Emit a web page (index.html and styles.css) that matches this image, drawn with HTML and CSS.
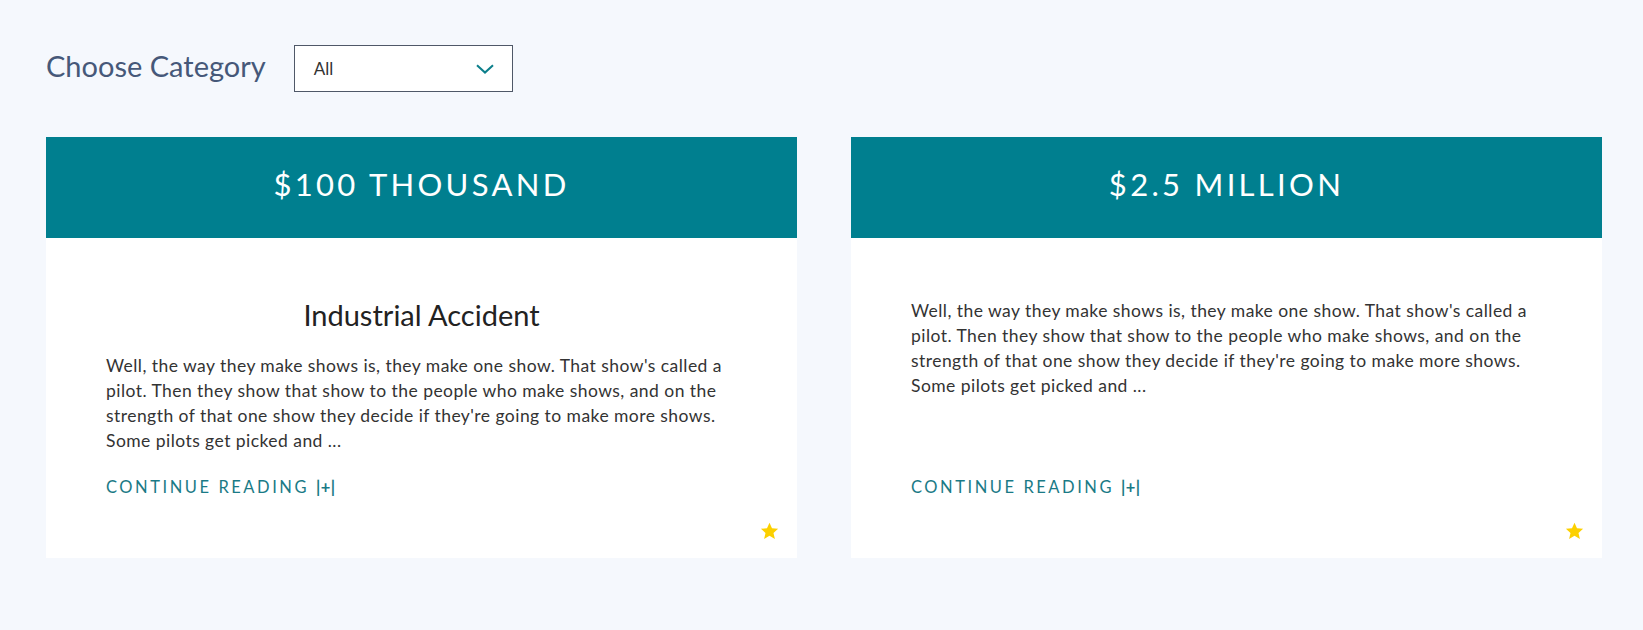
FILE: index.html
```html
<!DOCTYPE html>
<html lang="en">
<head>
<meta charset="utf-8">
<title>Categories</title>
<link rel="stylesheet" href="styles.css">
</head>
<body>
<main class="page">
  <div class="filter">
    <h2 class="filter-label">Choose Category</h2>
    <div class="select">
      <span class="select-value">All</span>
      <svg class="chevron" width="18" height="10" viewBox="0 0 18 10"><path d="M1 1.2 L9 8.6 L17 1.2" fill="none" stroke="#0c7f8b" stroke-width="2"/></svg>
    </div>
  </div>
  <div class="cards">
    <article class="card">
      <header class="card-head">$100 THOUSAND</header>
      <div class="card-body">
        <h3 class="card-title">Industrial Accident</h3>
        <p class="card-text">Well, the way they make shows is, they make one show. That show's called a pilot. Then they show that show to the people who make shows, and on the strength of that one show they decide if they're going to make more shows. Some pilots get picked and ...</p>
        <a class="card-link" href="#">CONTINUE READING <b class="plus">|+|</b></a>
      </div>
      <svg class="star" width="19" height="18" viewBox="0 0 24 23"><path d="M12 0.8 L15.2 8 L23 8.7 L17.1 13.9 L18.9 21.6 L12 17.6 L5.1 21.6 L6.9 13.9 L1 8.7 L8.8 8 Z" fill="#fcd000"/></svg>
    </article>
    <article class="card">
      <header class="card-head">$2.5 MILLION</header>
      <div class="card-body">
        <p class="card-text">Well, the way they make shows is, they make one show. That show's called a pilot. Then they show that show to the people who make shows, and on the strength of that one show they decide if they're going to make more shows. Some pilots get picked and ...</p>
        <a class="card-link" href="#">CONTINUE READING <b class="plus">|+|</b></a>
      </div>
      <svg class="star" width="19" height="18" viewBox="0 0 24 23"><path d="M12 0.8 L15.2 8 L23 8.7 L17.1 13.9 L18.9 21.6 L12 17.6 L5.1 21.6 L6.9 13.9 L1 8.7 L8.8 8 Z" fill="#fcd000"/></svg>
    </article>
  </div>
</main>
</body>
</html>
```

FILE: styles.css
```css
html, body {
  margin: 0;
  padding: 0;
  background: #f5f8fd;
}
body {
  font-family: Lato, "Noto Sans", "Liberation Sans", sans-serif;
  color: #333;
}
.page {
  padding: 45px 41px 0 46px;
}
.filter {
  display: flex;
  align-items: center;
  gap: 28px;
}
.filter-label {
  margin: 0;
  padding-bottom: 6px;
  font-size: 29px;
  font-weight: 400;
  color: #465879;
}
.select {
  box-sizing: border-box;
  width: 219px;
  height: 47px;
  border: 1px solid #4f5868;
  background: #fff;
  display: flex;
  align-items: center;
  justify-content: space-between;
  padding: 0 18px 0 19px;
}
.select-value {
  font-size: 17px;
  color: #333;
}
.cards {
  display: grid;
  grid-template-columns: 751px 751px;
  gap: 54px;
  margin-top: 45px;
}
.card {
  position: relative;
  background: #fff;
  display: flex;
  flex-direction: column;
  height: 421px;
}
.card-head {
  height: 101px;
  background: #007f8f;
  color: #fff;
  display: flex;
  align-items: center;
  justify-content: center;
  font-size: 31px;
  letter-spacing: 3.3px;
  padding-bottom: 8px;
  box-sizing: border-box;
}
.card-body {
  flex: 1;
  display: flex;
  flex-direction: column;
  padding: 60px 40px 62px 60px;
}
.card-title {
  margin: 0 20px 21px 0;
  text-align: center;
  font-size: 29px;
  font-weight: 400;
  line-height: 34px;
  color: #222;
}
.card-text {
  margin: 0;
  font-size: 17.5px;
  letter-spacing: 0.45px;
  line-height: 25px;
  color: #333;
}
.card-link {
  margin-top: auto;
  font-size: 16.5px;
  line-height: 18px;
  letter-spacing: 2.55px;
  color: #1a7a86;
  text-decoration: none;
}
.plus {
  font-weight: 700;
  letter-spacing: 0.5px;
}
.star {
  position: absolute;
  right: 18px;
  bottom: 18px;
}
```
